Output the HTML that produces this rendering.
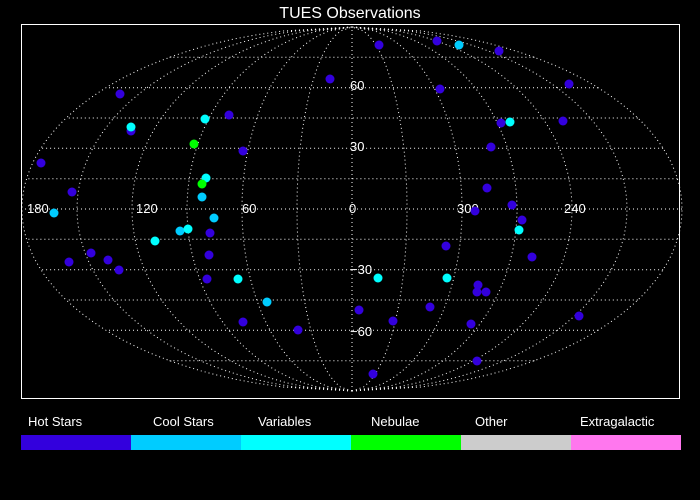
<!DOCTYPE html>
<html><head><meta charset="utf-8"><style>
html,body{margin:0;padding:0;background:#000;width:700px;height:500px;overflow:hidden}
svg{display:block}
text{font-family:"Liberation Sans",sans-serif;fill:#fff}
</style></head><body>
<svg id="s" width="700" height="500" viewBox="0 0 700 500">
<rect width="700" height="500" fill="#000"/>
<text x="350" y="18" font-size="16" text-anchor="middle">TUES Observations</text>
<rect x="21.5" y="24.5" width="658" height="374" fill="none" stroke="#fff" stroke-width="1"/>
<g id="grid" fill="none" stroke="#fff" stroke-width="1" stroke-dasharray="1 3"></g>
<g font-size="13">
<text x="27" y="213">180</text><text x="136" y="213">120</text><text x="242" y="213">60</text>
<text x="349" y="213">0</text><text x="457" y="213">300</text><text x="564" y="213">240</text>
<text x="350" y="90">60</text><text x="350" y="151">30</text>
<text x="350" y="274">−30</text><text x="350" y="336">−60</text>
</g>
<g id="dots"></g>
<g font-size="13">
<text x="28" y="426">Hot Stars</text><text x="153" y="426">Cool Stars</text><text x="258" y="426">Variables</text>
<text x="371" y="426">Nebulae</text><text x="475" y="426">Other</text><text x="580" y="426">Extragalactic</text>
</g>
<rect x="21" y="435" width="110" height="15" fill="#3300dd"/>
<rect x="131" y="435" width="110" height="15" fill="#00ccff"/>
<rect x="241" y="435" width="110" height="15" fill="#00ffff"/>
<rect x="351" y="435" width="110" height="15" fill="#00ff00"/>
<rect x="461" y="435" width="110" height="15" fill="#cccccc"/>
<rect x="571" y="435" width="110" height="15" fill="#ff77ee"/>
</svg>
<script>
var cx=352,cy=209,A=330,B=182,NS="http://www.w3.org/2000/svg";
function P(l,p){var y=p/90*B;var f=Math.sqrt(Math.max(0,1-(y/B)*(y/B)));return [cx-l/180*A*f,cy-y];}
var g=document.getElementById('grid');
function path(pts){var d="";pts.forEach(function(q,i){d+=(i?"L":"M")+q[0].toFixed(1)+" "+q[1].toFixed(1);});
var e=document.createElementNS(NS,"path");e.setAttribute("d",d);g.appendChild(e);}
for(var l=-180;l<=180;l+=30){var pts=[];for(var p=-90;p<=90;p+=2)pts.push(P(l,p));path(pts);}
for(var p=-75;p<=75;p+=15){var pts=[];for(var l=-180;l<=180;l+=4)pts.push(P(l,p));path(pts);}
var H="#3300dd",C="#00ccff",V="#00ffff",G="#00ff00";
var D=[[379,45,H],[437,41,H],[499,51,H],[330,79,H],[569,84,H],[440,89,H],[120,94,H],[229,115,H],[501,123,H],[563,121,H],[243,151,H],[491,147,H],[41,163,H],[72,192,H],[487,188,H],[475,211,H],[512,205,H],[522,220,H],[210,233,H],[446,246,H],[532,257,H],[91,253,H],[69,262,H],[108,260,H],[209,255,H],[119,270,H],[207,279,H],[478,285,H],[477,292,H],[486,292,H],[359,310,H],[430,307,H],[393,321,H],[243,322,H],[298,330,H],[471,324,H],[579,316,H],[373,374,H],[477,361,H],[131,131,H],
[54,213,C],[202,197,C],[214,218,C],[180,231,C],[267,302,C],[459,45,C],
[131,127,V],[205,119,V],[206,178,V],[188,229,V],[155,241,V],[238,279,V],[378,278,V],[447,278,V],[510,122,V],[519,230,V],
[194,144,G],[202,184,G]];
var dg=document.getElementById('dots');
D.forEach(function(d){var c=document.createElementNS(NS,"circle");c.setAttribute("cx",d[0]);c.setAttribute("cy",d[1]);c.setAttribute("r",4.5);c.setAttribute("fill",d[2]);dg.appendChild(c);});
</script>
</body></html>
